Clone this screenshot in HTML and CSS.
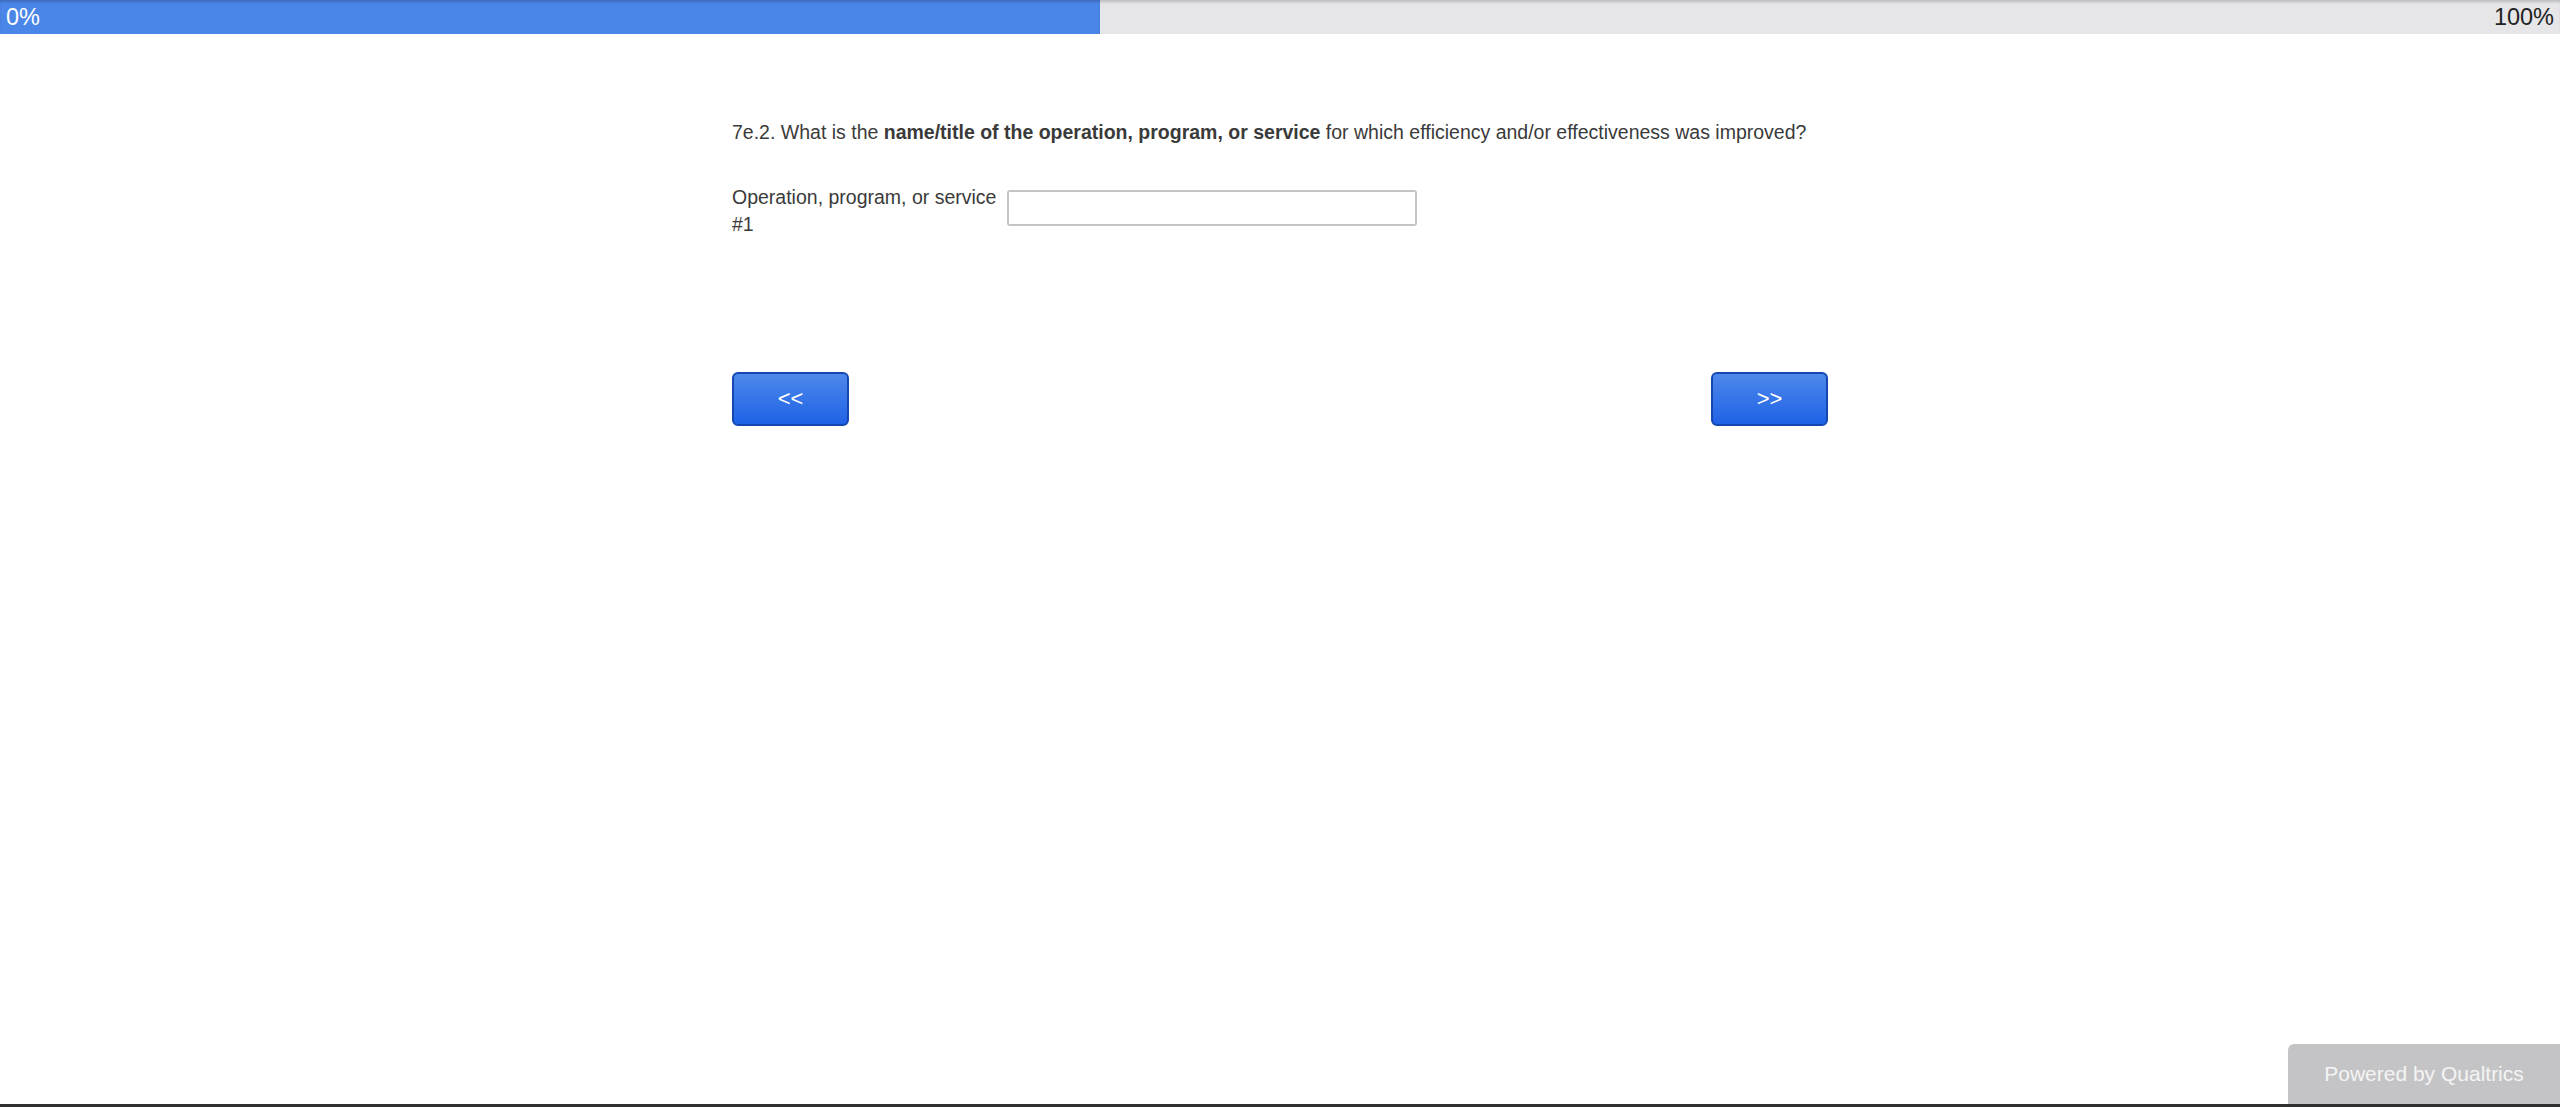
FILE: index.html
```html
<!DOCTYPE html>
<html lang="en">
<head>
  <meta charset="UTF-8">
  <title>Survey</title>
  <link rel="stylesheet" href="styles.css">
</head>
<body>
  <div class="progress">
    <div class="progress-fill" style="width: 1100px"></div>
    <span class="pct pct-start">0%</span>
    <span class="pct pct-end">100%</span>
  </div>

  <div class="survey">
    <div class="question">
      7e.2. What is the <b>name/title of the operation, program, or service</b> for which efficiency and/or effectiveness was improved?
    </div>

    <div class="answer-row">
      <label class="answer-label" for="op1">Operation, program, or service #1</label>
      <input id="op1" class="answer-input" type="text">
    </div>

    <div class="nav">
      <button class="nav-btn">&lt;&lt;</button>
      <button class="nav-btn">&gt;&gt;</button>
    </div>
  </div>

  <a class="powered">Powered by Qualtrics</a>
  <div class="bottom-strip"></div>
</body>
</html>
```

FILE: styles.css
```css
* {
  box-sizing: border-box;
}

body {
  margin: 0;
  font-family: 'Liberation Sans', Arial, sans-serif;
  color: #3a3a3a;
  background: #fff;
}

.progress {
  position: relative;
  height: 34px;
  background: #e6e6e8;
  box-shadow: inset 0 3px 3px -1px rgba(0, 0, 0, 0.18);
  display: flex;
  align-items: center;
  justify-content: space-between;
}

.progress-fill {
  position: absolute;
  left: 0;
  top: 0;
  bottom: 0;
  background: #4a86e8;
  box-shadow: inset 0 3px 3px -1px rgba(0, 0, 0, 0.2);
}

.pct {
  position: relative;
  font-size: 23.5px;
  padding: 0 6px;
}

.pct-start {
  color: #fff;
}

.pct-end {
  color: #222;
}

.survey {
  width: 1096px;
  margin: 0 auto;
  padding-top: 85px;
}

.question {
  font-size: 19.5px;
  line-height: 27px;
}

.answer-row {
  display: flex;
  align-items: flex-start;
  margin-top: 38px;
}

.answer-label {
  width: 275px;
  font-size: 19.5px;
  line-height: 27px;
}

.answer-input {
  width: 410px;
  height: 36px;
  margin-top: 6px;
  border: 2px solid #c4c4c6;
  border-radius: 3px;
  font-size: 18px;
  padding: 4px 8px;
}

.nav {
  display: flex;
  justify-content: space-between;
  margin-top: 134px;
}

.nav-btn {
  width: 117px;
  height: 54px;
  border: 2px solid #1348b0;
  border-radius: 6px;
  background: linear-gradient(to bottom, #4d88ea, #1f62e6);
  color: #fff;
  font-family: inherit;
  font-size: 22px;
  cursor: pointer;
}

.powered {
  position: fixed;
  right: 0;
  bottom: 3px;
  width: 272px;
  height: 60px;
  background: #c4c4c6;
  border-top-left-radius: 6px;
  color: #f4f4f4;
  font-size: 21px;
  display: flex;
  align-items: center;
  justify-content: center;
}

.bottom-strip {
  position: fixed;
  left: 0;
  right: 0;
  bottom: 0;
  height: 3px;
  background: #303030;
}
```
